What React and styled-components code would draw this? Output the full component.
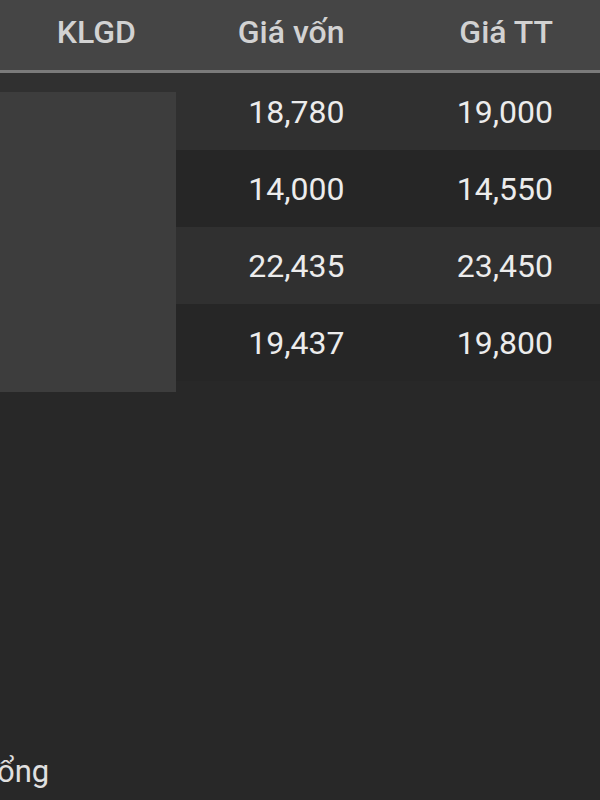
import React from 'react'
import styled, { createGlobalStyle } from 'styled-components';

const rows = [
  { cost: '18,780', market: '19,000' },
  { cost: '14,000', market: '14,550' },
  { cost: '22,435', market: '23,450' },
  { cost: '19,437', market: '19,800' },
];

function App() {
  return (
    <>
      <GlobalStyle />
      <Screen>
        <HeaderRow>
          <HeadCell>KLGD</HeadCell>
          <HeadCell>Giá vốn</HeadCell>
          <HeadCell>Giá TT</HeadCell>
        </HeaderRow>
        <Body>
          {rows.map((row, index) => (
            <Row key={index} odd={index % 2 === 0}>
              <Cell />
              <Cell>{row.cost}</Cell>
              <Cell>{row.market}</Cell>
            </Row>
          ))}
          <Mask />
        </Body>
        <Spacer />
        <Footer>Tổng</Footer>
      </Screen>
    </>
  )
}

export default App

const GlobalStyle = createGlobalStyle`
  body {
    margin: 0;
    background: #282828;
    font-family: Roboto, "Liberation Sans", sans-serif;
  }
`

const Screen = styled.div`
  width: 600px;
  height: 800px;
  display: flex;
  flex-direction: column;
  background: #282828;
  overflow: hidden;
`

const HeaderRow = styled.div`
  display: grid;
  grid-template-columns: 136px 1fr 1fr;
  align-items: center;
  height: 70px;
  padding: 0 47px 6px 0;
  box-sizing: border-box;
  background: #454545;
  border-bottom: 3px solid #7a7a7a;
  box-sizing: content-box;
  height: 64px;
`

const HeadCell = styled.div`
  text-align: right;
  font-size: 32px;
  font-weight: 500;
  color: #d2d2d2;
`

const Body = styled.div`
  position: relative;
`

const Row = styled.div`
  display: grid;
  grid-template-columns: 136px 1fr 1fr;
  align-items: center;
  height: 77px;
  padding-right: 47px;
  background: ${props => props.odd ? '#303030' : '#262626'};
`

const Cell = styled.div`
  text-align: right;
  font-size: 32px;
  color: #ececec;
`

const Mask = styled.div`
  position: absolute;
  top: 19px;
  left: 0;
  width: 176px;
  height: 300px;
  background: #3d3d3d;
`

const Spacer = styled.div`
  flex: 1;
`

const Footer = styled.div`
  margin-left: -20px;
  padding-bottom: 10px;
  font-size: 31px;
  color: #e0e0e0;
`
